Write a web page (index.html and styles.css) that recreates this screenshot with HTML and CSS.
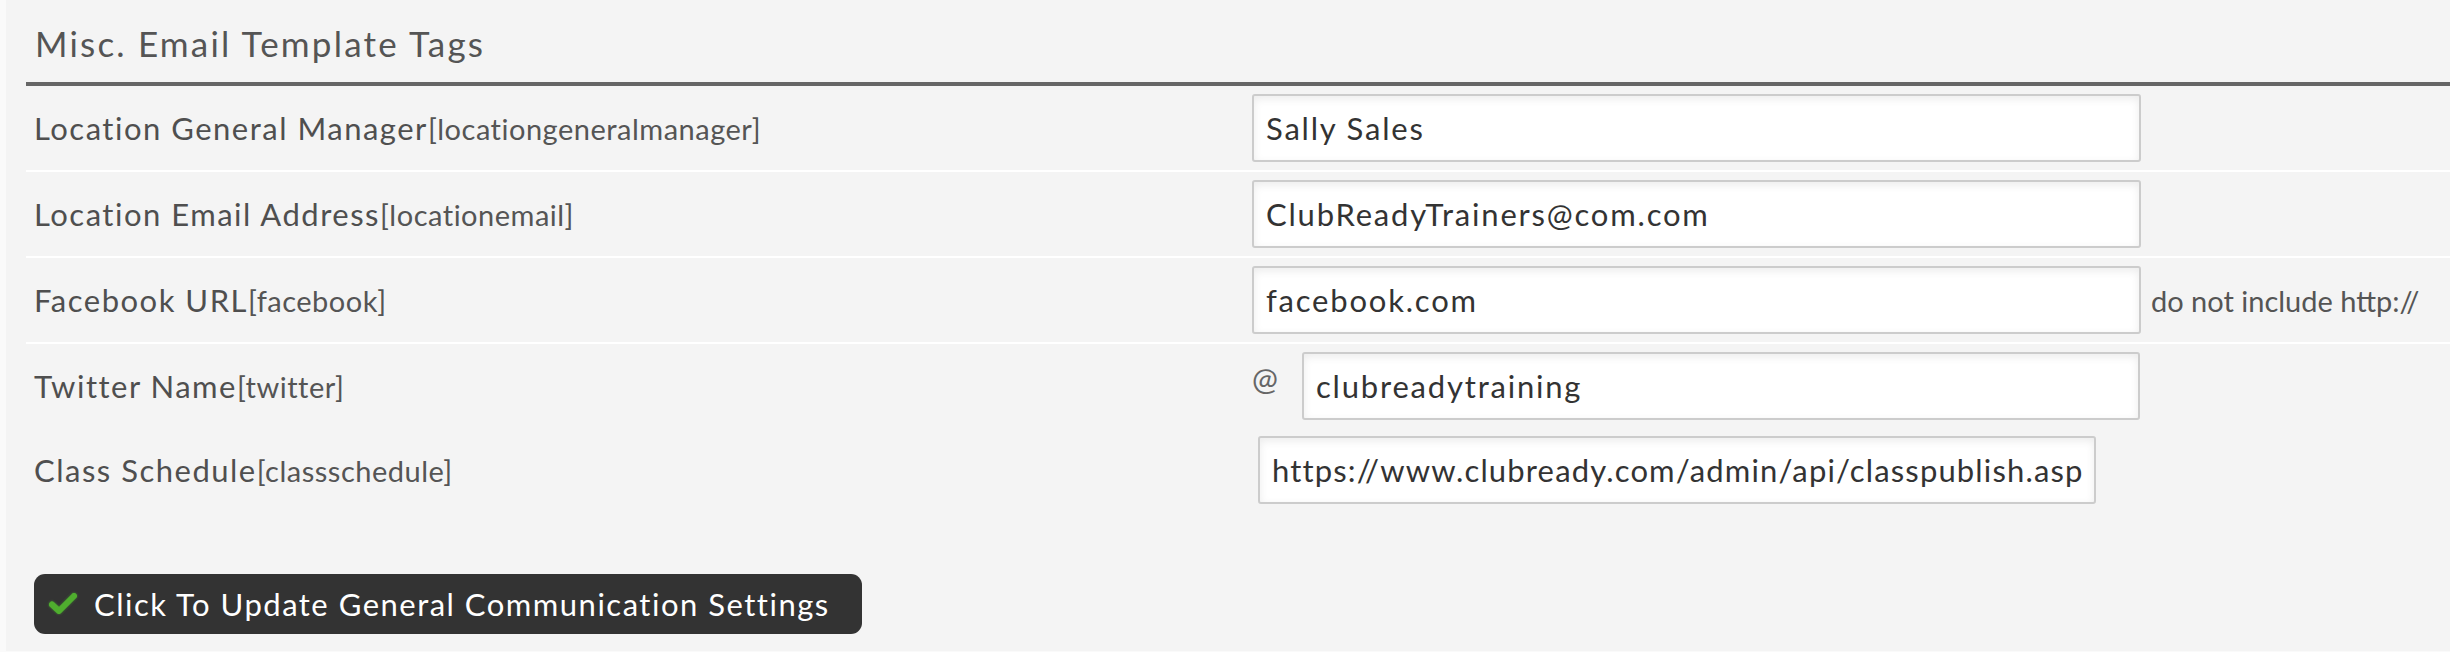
FILE: index.html
```html
<!DOCTYPE html>
<html lang="en">
<head>
<meta charset="utf-8">
<title>Misc. Email Template Tags</title>
<link rel="stylesheet" href="styles.css">
</head>
<body>
<div class="panel">
  <h2 class="section-title">Misc. Email Template Tags</h2>
  <div class="row sep">
    <div class="label">Location General Manager<span class="tag">[locationgeneralmanager]</span></div>
    <div class="field"><input class="txt w-full" type="text" value="Sally Sales"></div>
  </div>
  <div class="row sep">
    <div class="label">Location Email Address<span class="tag">[locationemail]</span></div>
    <div class="field"><input class="txt w-full" type="text" value="ClubReadyTrainers@com.com"></div>
  </div>
  <div class="row sep">
    <div class="label">Facebook URL<span class="tag">[facebook]</span></div>
    <div class="field"><input class="txt w-full" type="text" value="facebook.com"><span class="hint">do not include http://</span></div>
  </div>
  <div class="row">
    <div class="label">Twitter Name<span class="tag">[twitter]</span></div>
    <div class="field"><span class="at">@</span><input class="txt w-twitter" type="text" value="clubreadytraining"></div>
  </div>
  <div class="row">
    <div class="label">Class Schedule<span class="tag">[classschedule]</span></div>
    <div class="field"><input class="txt w-sched" type="text" value="https://www.clubready.com/admin/api/classpublish.asp"></div>
  </div>
  <button class="btn" type="button">
    <svg class="check" viewBox="0 0 30 24" width="30" height="24" aria-hidden="true">
      <path d="M4 12.5 L11 19 L26 4" fill="none" stroke="#4fae2e" stroke-width="6" stroke-linecap="round" stroke-linejoin="round"/>
    </svg>
    <span>Click To Update General Communication Settings</span>
  </button>
</div>
</body>
</html>
```
FILE: styles.css
```css
html, body {
  margin: 0;
  padding: 0;
  background: #fafafa;
}
body {
  font-family: "Lato", "Open Sans", sans-serif;
  color: #4f4f4f;
}
.panel {
  margin-left: 6px;
  padding-left: 20px;
  background: #f4f4f4;
  height: 651px;
  box-sizing: border-box;
}
.section-title {
  margin: 0;
  box-sizing: border-box;
  height: 86px;
  padding: 21px 0 0 9px;
  font-size: 35px;
  font-weight: 400;
  line-height: 44px;
  letter-spacing: 2.2px;
  color: #555;
  border-bottom: 4px solid #666;
}
.row {
  display: grid;
  grid-template-columns: 1226px 1fr;
  align-items: center;
  height: 84px;
}
.row.sep {
  border-bottom: 2px solid #fff;
}
.label {
  padding-left: 8px;
  font-size: 31px;
  letter-spacing: 1.5px;
  color: #4f4f4f;
  white-space: nowrap;
}
.tag {
  font-size: 29px;
  letter-spacing: 0.5px;
  color: #555;
}
.field {
  display: flex;
  align-items: center;
}
.txt {
  box-sizing: border-box;
  height: 68px;
  border: 2px solid #ccc;
  border-radius: 3px;
  background: #fff;
  box-shadow: inset 0 3px 8px rgba(0, 0, 0, 0.08);
  padding: 0 12px;
  font-family: "Lato", "Open Sans", sans-serif;
  font-size: 31px;
  letter-spacing: 1.8px;
  color: #333;
  outline: none;
}
.w-full { width: 889px; }
.w-twitter { width: 838px; }
.w-sched {
  width: 838px;
  margin-left: 6px;
  padding: 0 10px 0 12px;
  letter-spacing: 1.15px;
}
.hint {
  margin-left: 10px;
  font-size: 29px;
  color: #555;
}
.at {
  width: 50px;
  font-size: 31px;
  color: #666;
  margin-top: -16px;
}
.btn {
  margin: 62px 0 0 8px;
  width: 828px;
  height: 60px;
  display: flex;
  align-items: center;
  gap: 16px;
  padding: 0 0 0 14px;
  background: #333;
  border: none;
  border-radius: 11px;
  color: #fff;
  font-family: "Lato", "Open Sans", sans-serif;
  font-size: 31px;
  letter-spacing: 1.5px;
  cursor: pointer;
}
.check {
  flex: none;
  filter: drop-shadow(0 0 1px rgba(80, 190, 50, 0.6));
}
```
